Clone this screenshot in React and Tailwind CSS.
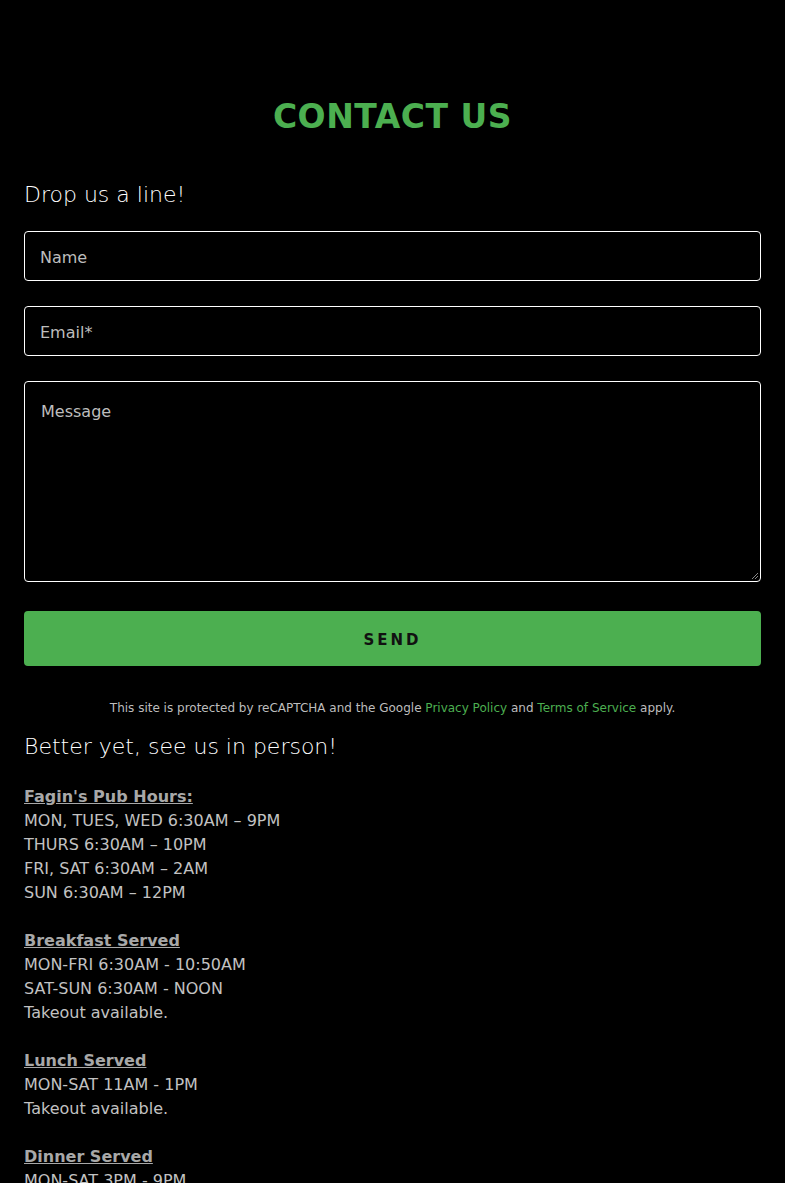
export default function App() {
  const font = { fontFamily: '"DejaVu Sans", "Noto Sans", sans-serif' };
  return (
    <div className="min-h-[1183px] bg-black text-[#e8e8e8] px-6" style={font}>
      <h1
        className="pt-[99px] text-center text-[33px] leading-[36px] uppercase text-[#4caf50] tracking-[0.5px]"
        style={{ fontFamily: '"DejaVu Sans", sans-serif', fontWeight: 900 }}
      >
        Contact Us
      </h1>
      <h2 className="mt-[45px] text-[22px] leading-[30px] font-light text-white">Drop us a line!</h2>
      <form className="mt-[21px] flex flex-col">
        <div className="h-[50px] rounded-[4px] border border-white flex items-center px-[15px] pt-[3px] text-[16px] text-[#bdbdbd]">Name</div>
        <div className="mt-[25px] h-[50px] rounded-[4px] border border-white flex items-center px-[15px] pt-[3px] text-[16px] text-[#bdbdbd]">Email*</div>
        <div className="mt-[25px] h-[201px] rounded-[4px] border border-white px-[16px] pt-[18px] text-[16px] text-[#bdbdbd] relative">
          Message
          <svg className="absolute right-[1px] bottom-[1px]" width="8" height="8" viewBox="0 0 8 8">
            <path d="M7 1 L1 7 M7 4 L4 7" stroke="#888" strokeWidth="1" />
          </svg>
        </div>
        <div className="mt-[29px] h-[55px] rounded-[4px] bg-[#4caf50] flex items-center justify-center pt-[3px] text-[15px] font-bold tracking-[3px] text-[#111]">
          SEND
        </div>
      </form>
      <p className="mt-[34px] text-center text-[12px] leading-[16px] text-[#bdbdbd]">
        This site is protected by reCAPTCHA and the Google <span className="text-[#4caf50]">Privacy Policy</span> and{' '}
        <span className="text-[#4caf50]">Terms of Service</span> apply.
      </p>
      <h3 className="mt-[16px] text-[22px] leading-[30px] font-light text-white">Better yet, see us in person!</h3>
      <div className="mt-[23px] text-[16px] leading-[24px] text-[#c2c2c2]">
        <p className="font-bold underline text-[#a8a8a8]">Fagin's Pub Hours:</p>
        <p>MON, TUES, WED 6:30AM – 9PM</p>
        <p>THURS 6:30AM – 10PM</p>
        <p>FRI, SAT 6:30AM – 2AM</p>
        <p>SUN 6:30AM – 12PM</p>
        <p className="h-[24px]"></p>
        <p className="font-bold underline text-[#a8a8a8]">Breakfast Served</p>
        <p>MON-FRI 6:30AM - 10:50AM</p>
        <p>SAT-SUN 6:30AM - NOON</p>
        <p>Takeout available.</p>
        <p className="h-[24px]"></p>
        <p className="font-bold underline text-[#a8a8a8]">Lunch Served</p>
        <p>MON-SAT 11AM - 1PM</p>
        <p>Takeout available.</p>
        <p className="h-[24px]"></p>
        <p className="font-bold underline text-[#a8a8a8]">Dinner Served</p>
        <p>MON-SAT 3PM - 9PM</p>
        <p>Takeout available.</p>
      </div>
    </div>
  );
}
